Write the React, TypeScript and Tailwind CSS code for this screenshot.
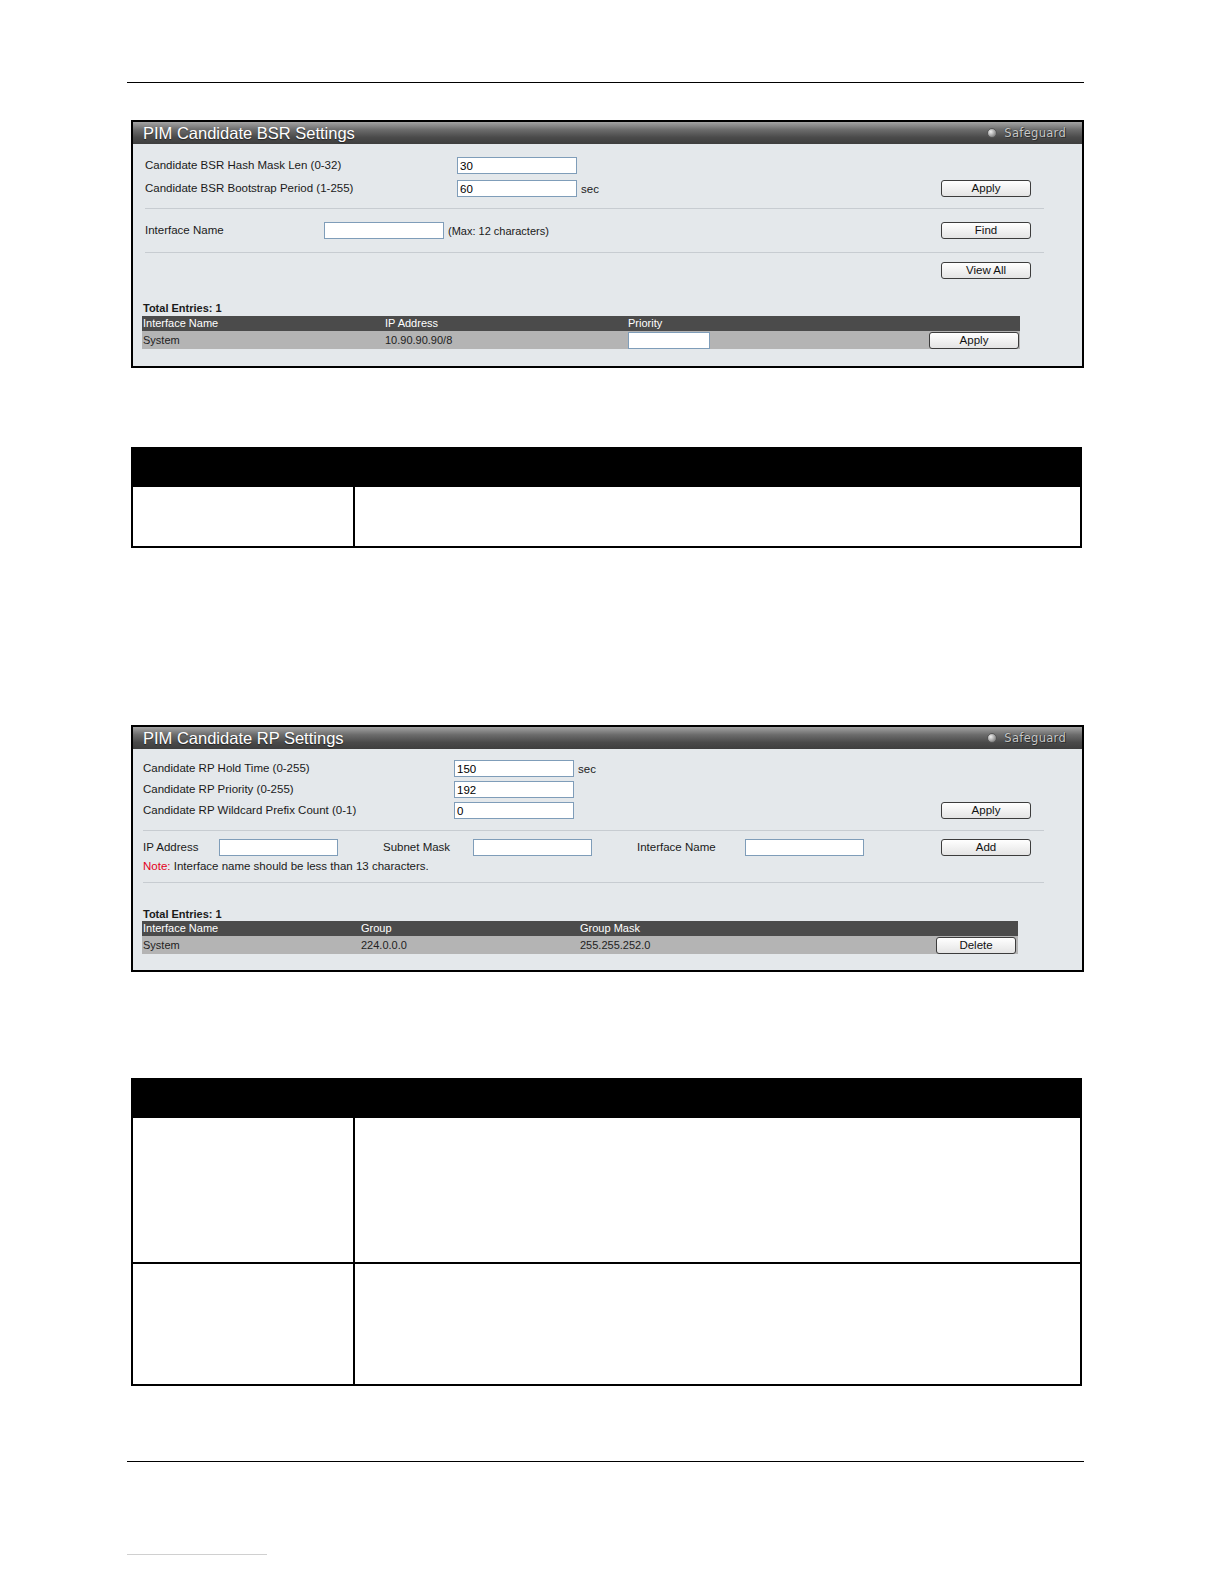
import React from "react";

const Input = ({ value = "", w = "w-[120px]" }: { value?: string; w?: string }) => (
  <input
    readOnly
    defaultValue={value}
    className={`${w} h-[17px] bg-white border border-[#7f9db9] px-[2px] text-[11.5px] leading-[15px] text-black outline-none`}
  />
);

const Btn = ({ label, w = "w-[90px]", className = "" }: { label: string; w?: string; className?: string }) => (
  <button
    className={`${w} h-[17px] rounded-[3px] border border-[#3c3c3c] bg-[linear-gradient(#ffffff,#e4e4e4)] text-[11.5px] leading-[15px] text-[#111] ${className}`}
  >
    {label}
  </button>
);

const PanelHeader = ({ title }: { title: string }) => (
  <div className="h-[22px] flex items-center justify-between pl-[10px] pr-[16px] bg-[linear-gradient(to_bottom,#a4a4a4_0%,#6c6c6c_35%,#4a4a4a_70%,#3e3e3e_100%)]">
    <span className="text-white text-[16.5px] leading-[20px] [text-shadow:0_1px_1px_rgba(0,0,0,0.5)]">{title}</span>
    <div className="flex items-center gap-[7px]">
      <span className="w-[10px] h-[10px] rounded-full border border-[#555] bg-[radial-gradient(circle_at_35%_35%,#f0f0f0,#8a8a8a_70%)]" />
      <span className="text-[11.5px] leading-[14px] text-[#c9c9c9] font-['DejaVu_Sans',sans-serif] tracking-[0.3px] [text-shadow:0_0_1px_#222,1px_1px_0_#333]">
        Safeguard
      </span>
    </div>
  </div>
);

const Sep = ({ className = "" }: { className?: string }) => <div className={`h-px bg-[#c7ccd1] ${className}`} />;

const DescTable = ({ rows, className = "" }: { rows: number[]; className?: string }) => (
  <div className={`ml-[131px] w-[951px] border-2 border-black bg-white ${className}`}>
    <div className="h-[38px] bg-black" />
    {rows.map((h, i) => (
      <div key={i} className={`flex ${i > 0 ? "border-t-2 border-black" : ""}`} style={{ height: h }}>
        <div className="w-[222px] border-r-2 border-black" />
        <div className="flex-1" />
      </div>
    ))}
  </div>
);

export default function App() {
  return (
    <div className="w-[1224px] h-[1584px] overflow-hidden bg-white font-['Liberation_Sans',Arial,sans-serif] text-[11.5px] text-[#1a1a1a] pt-[82px]">
      <div className="ml-[127px] w-[957px] h-px bg-black" />

      {/* PIM Candidate BSR Settings */}
      <div className="ml-[131px] mt-[37px] w-[953px] border-2 border-black bg-[#e4e8eb]">
        <PanelHeader title="PIM Candidate BSR Settings" />
        <div className="pt-[13px] pb-[17px]">
          <div className="ml-[12px] w-[899px]">
            <div className="flex items-center h-[17px]">
              <span className="w-[312px]">Candidate BSR Hash Mask Len (0-32)</span>
              <Input value="30" />
            </div>
            <div className="flex items-center h-[17px] mt-[6px]">
              <span className="w-[312px]">Candidate BSR Bootstrap Period (1-255)</span>
              <Input value="60" />
              <span className="ml-[4px] mt-[2px]">sec</span>
              <Btn label="Apply" className="ml-auto mr-[13px]" />
            </div>
            <Sep className="mt-[11px]" />
            <div className="flex items-center h-[17px] mt-[13px]">
              <span className="w-[179px]">Interface Name</span>
              <Input />
              <span className="ml-[4px] mt-[1px] text-[11px]">(Max: 12 characters)</span>
              <Btn label="Find" className="ml-auto mr-[13px]" />
            </div>
            <Sep className="mt-[13px]" />
            <div className="flex items-center h-[17px] mt-[9px]">
              <Btn label="View All" className="ml-auto mr-[13px]" />
            </div>
          </div>
          <div className="ml-[9px] w-[878px] mt-[22px] text-[11px]">
            <div className="font-bold leading-[14px] mb-px pl-px">Total Entries: 1</div>
            <div className="flex h-[15px] bg-[#4b4b4b] text-white leading-[15px]">
              <span className="w-[243px] pl-px">Interface Name</span>
              <span className="w-[243px]">IP Address</span>
              <span>Priority</span>
            </div>
            <div className="flex items-center h-[18px] bg-[#b4b4b4] text-[#222]">
              <span className="w-[243px] pl-px">System</span>
              <span className="w-[243px]">10.90.90.90/8</span>
              <Input w="w-[82px]" />
              <Btn label="Apply" className="ml-auto mr-px" />
            </div>
          </div>
        </div>
      </div>

      <DescTable rows={[59]} className="mt-[79px]" />

      {/* PIM Candidate RP Settings */}
      <div className="ml-[131px] mt-[177px] w-[953px] border-2 border-black bg-[#e4e8eb]">
        <PanelHeader title="PIM Candidate RP Settings" />
        <div className="pt-[11px] pb-[16px]">
          <div className="ml-[10px] w-[901px]">
            <div className="flex items-center h-[17px]">
              <span className="w-[311px]">Candidate RP Hold Time (0-255)</span>
              <Input value="150" />
              <span className="ml-[4px] mt-[2px]">sec</span>
            </div>
            <div className="flex items-center h-[17px] mt-[4px]">
              <span className="w-[311px]">Candidate RP Priority (0-255)</span>
              <Input value="192" />
            </div>
            <div className="flex items-center h-[17px] mt-[4px]">
              <span className="w-[311px]">Candidate RP Wildcard Prefix Count (0-1)</span>
              <Input value="0" />
              <Btn label="Apply" className="ml-auto mr-[13px]" />
            </div>
            <Sep className="mt-[11px]" />
            <div className="flex items-center h-[17px] mt-[8px]">
              <span className="w-[76px]">IP Address</span>
              <Input w="w-[119px]" />
              <span className="w-[90px] ml-[45px]">Subnet Mask</span>
              <Input w="w-[119px]" />
              <span className="w-[108px] ml-[45px]">Interface Name</span>
              <Input w="w-[119px]" />
              <Btn label="Add" className="ml-auto mr-[13px]" />
            </div>
            <div className="mt-[3px] leading-[14px]">
              <span className="text-[#e3001b]">Note:</span> Interface name should be less than 13 characters.
            </div>
            <Sep className="mt-[9px]" />
          </div>
          <div className="ml-[9px] w-[876px] mt-[24px] text-[11px]">
            <div className="font-bold leading-[14px] pl-px">Total Entries: 1</div>
            <div className="flex h-[15px] bg-[#4b4b4b] text-white leading-[15px]">
              <span className="w-[219px] pl-px">Interface Name</span>
              <span className="w-[219px]">Group</span>
              <span>Group Mask</span>
            </div>
            <div className="flex items-center h-[18px] bg-[#b4b4b4] text-[#222]">
              <span className="w-[219px] pl-px">System</span>
              <span className="w-[219px]">224.0.0.0</span>
              <span>255.255.252.0</span>
              <Btn label="Delete" w="w-[80px]" className="ml-auto mr-[2px]" />
            </div>
          </div>
        </div>
      </div>

      <DescTable rows={[144, 122]} className="mt-[106px]" />

      <div className="ml-[127px] mt-[75px] w-[957px] h-px bg-black" />
      <div className="ml-[127px] mt-[92px] w-[140px] h-px bg-[#d0d0d0]" />
    </div>
  );
}
